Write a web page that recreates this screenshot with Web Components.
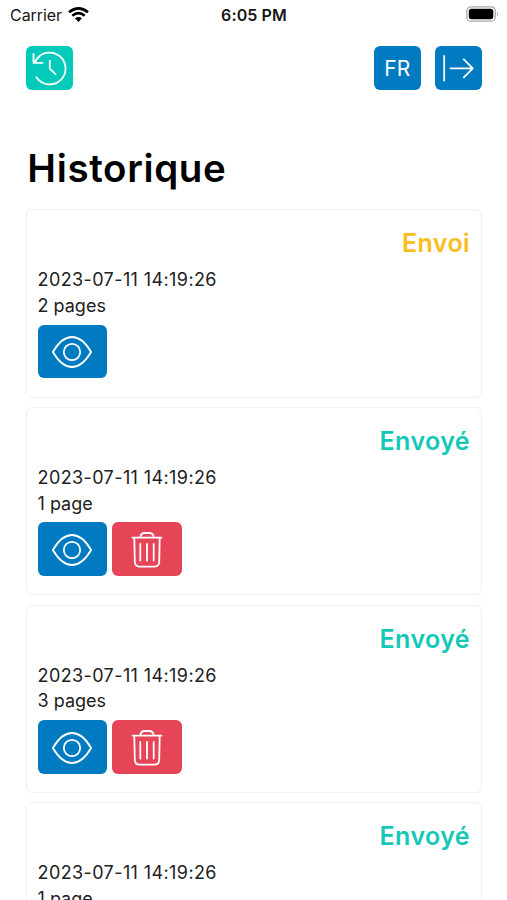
<!DOCTYPE html>
<html lang="fr">
<head>
<meta charset="utf-8">
<title>Historique</title>
<style>
html, body {
    margin: 0;
    height: 900px;
    overflow: hidden;
    background: #fff;
    font-family: Inter, "Liberation Sans", sans-serif;
}
</style>
</head>
<body>
<history-page></history-page>

<script>
const icons = {
    eye: `<svg width="40" height="32" viewBox="0 0 40 32"><path d="M.9 16C6 7.200 12.500 1 20 1s14 6.200 19.100 15C34 24.800 27.500 31 20 31S6 24.800.9 16z"/><circle cx="20" cy="16" r="8.200"/></svg>`,
    trash: `<svg width="32" height="36" viewBox="0 0 32 36"><path d="M1.500 5.600h29M3.300 5.800l.5 24.200q.2 4.600 4.700 4.600h15q4.500 0 4.700-4.600l.5-24.200M9.300 5.400q.5-4.400 4.200-4.400h5q3.700 0 4.200 4.400M9.300 12v16.500M16 12v16.500M22.700 12v16.500"/></svg>`,
    clock: `<svg width="36" height="36" viewBox="0 0 36 36"><path d="M5.400 27.300A15.900 15.900 0 1 0 4.500 11.200M2.500 4v8.800h9M3.100 12.200l5-5.200M18.800 10.700v8l5.700 5.500"/></svg>`,
    logout: `<svg width="32" height="28" viewBox="0 0 32 28"><path d="M2.200 2v24.500M8.500 14.300h22.300M21.800 5.300l9 9-9 9"/></svg>`
};

const templateStatus = document.createElement('template');
templateStatus.innerHTML =
`
<style>
:host {
    display: grid;
    grid-template-columns: 1fr auto 1fr;
    align-items: center;
    height: 29px;
    padding: 0 8px 0 10px;
    color: #161616;
}
.carrier {
    display: flex;
    align-items: center;
    gap: 6px;
    font-size: 16px;
    letter-spacing: -.05px;
}
.time {
    font-size: 16px;
    font-weight: 600;
    margin-left: -1px;
    letter-spacing: .1px;
}
.battery {
    justify-self: end;
    margin-top: -2px;
}
svg {
    display: block;
}
</style>

<div class="carrier">
    <span>Carrier</span>
    <svg width="21" height="15" viewBox="0 0 21 15">
        <path d="M1 5.300Q10.500-2.400 20 5.300M4.300 8.700q6.200-5 12.400 0" fill="none" stroke="#000" stroke-width="2.700"/>
        <path d="M7 11.300q3.500-2.500 7 0L10.500 15z"/>
    </svg>
</div>
<div class="time">6:05 PM</div>
<svg class="battery" width="33" height="16" viewBox="0 0 33 16">
    <rect x=".8" y=".8" width="28.500" height="14.400" rx="4.300" fill="#fff" stroke="#aaa" stroke-width="1.300"/>
    <rect x="2.800" y="2.800" width="24.500" height="10.400" rx="2.600"/>
    <path d="M31 5.500q2 2.500 0 5z" fill="#aaa"/>
</svg>
`;

class StatusBar extends HTMLElement {
    constructor(){
        super();
        this._sR = this.attachShadow({mode:'open'})
        this._sR.appendChild(templateStatus.content.cloneNode(true))
    }
}
window.customElements.define('status-bar', StatusBar);


const templateButton = document.createElement('template');
templateButton.innerHTML =
`
<style>
:host {
    display: block;
    width: 46.500px;
    height: 44px;
}
:host([size="large"]) {
    width: 69.500px;
    height: 53.500px;
}
button {
    display: flex;
    justify-content: center;
    align-items: center;
    width: 100%;
    height: 100%;
    padding: 0;
    border: 0;
    border-radius: 6px;
    background: #007bc1;
    color: #fff;
    font: inherit;
    font-size: 21px;
    cursor: pointer;
}
:host([color="teal"]) button {
    background: #04cab9;
}
:host([color="red"]) button {
    background: #e64557;
}
.text {
    padding-top: 1px;
}
.icon {
    display: flex;
}
.icon:empty {
    display: none;
}
:host([size="large"]) .icon {
    padding-top: 1.500px;
}
svg {
    display: block;
    fill: none;
    stroke: currentColor;
    stroke-width: 1.800;
    stroke-linecap: round;
    stroke-linejoin: round;
}
</style>

<button><span class="icon"></span><span class="text"><slot></slot></span></button>
`;

class IconButton extends HTMLElement {
    constructor(){
        super();
        this._sR = this.attachShadow({mode:'open'})
        this._sR.appendChild(templateButton.content.cloneNode(true))

        this.$icon = this._sR.querySelector('.icon');
    }

    static get observedAttributes(){
        return ['icon'];
    }

    attributeChangedCallback(name, oldVal, newVal) {
        this.$icon.innerHTML = icons[newVal] || '';
    }
}
window.customElements.define('icon-button', IconButton);


const templateCard = document.createElement('template');
templateCard.innerHTML =
`
<style>
:host {
    display: block;
    box-sizing: border-box;
    height: 188.500px;
    padding: 18px 10.500px 0 10.500px;
    border: 1.500px solid #f0f0f0;
    border-radius: 6px;
    color: #212121;
    font-size: 18px;
    line-height: 26px;
}
.status {
    height: 30px;
    line-height: 30px;
    text-align: right;
    font-size: 25px;
    font-weight: 600;
    letter-spacing: .4px;
    color: #14c8b8;
}
:host([state="sending"]) .status {
    color: #fcbd1c;
}
.date {
    margin-top: 9px;
    letter-spacing: .4px;
}
.pages {
    margin-top: -.2px;
}
.actions {
    display: flex;
    gap: 5px;
    margin-top: 5.700px;
}
</style>

<div class="status"><slot name="status"></slot></div>
<div class="date"><slot name="date"></slot></div>
<div class="pages"><slot name="pages"></slot></div>
<div class="actions"><slot></slot></div>
`;

class HistoryCard extends HTMLElement {
    constructor(){
        super();
        this._sR = this.attachShadow({mode:'open'})
        this._sR.appendChild(templateCard.content.cloneNode(true))
    }
}
window.customElements.define('history-card', HistoryCard);


const templatePage = document.createElement('template');
templatePage.innerHTML =
`
<style>
:host {
    display: block;
    height: 900px;
    overflow: hidden;
}
.toolbar {
    display: flex;
    gap: 14.500px;
    padding: 16.700px 25.500px 0 26px;
}
.toolbar .first {
    margin-right: auto;
}
h1 {
    margin: 53.300px 0 0 27.300px;
    height: 50px;
    line-height: 50px;
    font-size: 38.500px;
    font-weight: 600;
    letter-spacing: .65px;
    color: #000;
}
.list {
    display: flex;
    flex-direction: column;
    gap: 9.200px;
    padding: 16.200px 25.500px 0 26px;
}
</style>

<status-bar></status-bar>
<div class="toolbar">
    <icon-button class="first" icon="clock" color="teal"></icon-button>
    <icon-button>FR</icon-button>
    <icon-button icon="logout"></icon-button>
</div>
<h1>Historique</h1>
<div class="list"></div>
`;

const entries = [
    { state: 'sending', status: 'Envoi', pages: '2 pages' },
    { state: 'sent', status: 'Envoyé', pages: '1 page' },
    { state: 'sent', status: 'Envoyé', pages: '3 pages' },
    { state: 'sent', status: 'Envoyé', pages: '1 page' }
];

class HistoryPage extends HTMLElement {
    constructor(){
        super();
        this._sR = this.attachShadow({mode:'open'})
        this._sR.appendChild(templatePage.content.cloneNode(true))

        this.$list = this._sR.querySelector('.list');
    }

    connectedCallback() {
        this.render();
    }

    render() {
        // only sent documents can be deleted
        this.$list.innerHTML = entries.map(entry => `
            <history-card state="${entry.state}">
                <span slot="status">${entry.status}</span>
                <span slot="date">2023-07-11 14:19:26</span>
                <span slot="pages">${entry.pages}</span>
                <icon-button icon="eye" size="large"></icon-button>
                ${entry.state === 'sent' ? '<icon-button icon="trash" size="large" color="red"></icon-button>' : ''}
            </history-card>
        `).join('');
    }
}
window.customElements.define('history-page', HistoryPage);
</script>
</body>
</html>
